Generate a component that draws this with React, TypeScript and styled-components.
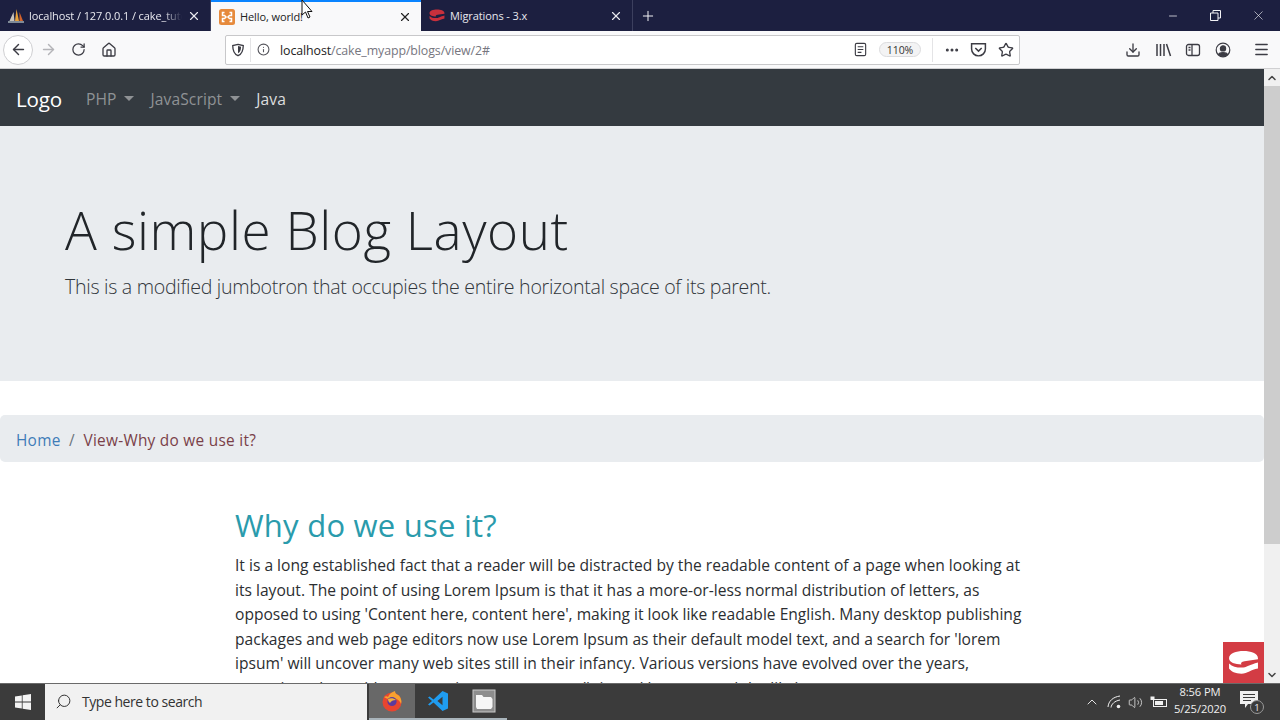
import styled, { createGlobalStyle } from 'styled-components';
import {
    ArrowLeft,
    ArrowRight,
    ChevronDown,
    ChevronUp,
    Download,
    Home,
    Info,
    Menu,
    Minus,
    MoreHorizontal,
    Plus,
    RotateCw,
    Search,
    Star,
    Volume2,
    X,
} from 'lucide-react';

const paragraphLines = [
    'It is a long established fact that a reader will be distracted by the readable content of a page when looking at',
    'its layout. The point of using Lorem Ipsum is that it has a more-or-less normal distribution of letters, as',
    "opposed to using 'Content here, content here', making it look like readable English. Many desktop publishing",
    "packages and web page editors now use Lorem Ipsum as their default model text, and a search for 'lorem",
    "ipsum' will uncover many web sites still in their infancy. Various versions have evolved over the years,",
    'sometimes by accident, sometimes on purpose (injected humour and the like).',
];

const GlobalStyle = createGlobalStyle`
    html, body {
        margin: 0;
        padding: 0;
        background: #fff;
    }
    * {
        box-sizing: border-box;
    }
`;

const Screen = styled.div`
    position: relative;
    width: 1280px;
    height: 720px;
    overflow: hidden;
    display: flex;
    flex-direction: column;
    font-family: 'Open Sans', 'Noto Sans', sans-serif;
`;

const TabBar = styled.div`
    height: 31px;
    flex: none;
    display: flex;
    background: #1c1f40;
    color: #f2f2f5;
`;

const Tab = styled.div<{ $active?: boolean; $width: number }>`
    width: ${(p) => p.$width}px;
    flex: none;
    display: flex;
    align-items: center;
    gap: 5px;
    padding: 0 9px 0 8px;
    font-size: 11px;
    letter-spacing: -0.1px;
    background: ${(p) => (p.$active ? '#f9f9fa' : 'transparent')};
    color: ${(p) => (p.$active ? '#222' : '#e8e8ee')};
    border-top: ${(p) => (p.$active ? '2px solid #0a84ff' : 'none')};
    border-right: ${(p) => (p.$active ? 'none' : '1px solid #3c3f5e')};
`;

const TabTitle = styled.span<{ $fade?: boolean }>`
    flex: 1;
    white-space: nowrap;
    overflow: hidden;
    mask-image: ${(p) => (p.$fade ? 'linear-gradient(to right, #000 88%, transparent 100%)' : 'none')};
`;

const NewTab = styled.div`
    width: 30px;
    display: flex;
    align-items: center;
    justify-content: center;
`;

const WindowButtons = styled.div`
    margin-left: auto;
    display: flex;
    align-items: center;
`;

const WindowButton = styled.div`
    width: 43px;
    height: 30px;
    display: flex;
    align-items: center;
    justify-content: center;
`;

const Toolbar = styled.div`
    height: 38px;
    flex: none;
    display: flex;
    align-items: center;
    background: #f9f9fa;
    color: #3c3c44;
    padding-left: 3px;
    border-bottom: 1px solid #d0d0d2;
`;

const ToolButton = styled.div<{ $width?: number; $faded?: boolean; $round?: boolean }>`
    width: ${(p) => p.$width ?? 30}px;
    height: 30px;
    flex: none;
    display: flex;
    align-items: center;
    justify-content: center;
    color: ${(p) => (p.$faded ? '#b4b4b8' : 'inherit')};
    border-radius: 50%;
    border: ${(p) => (p.$round ? '1px solid #cfcfd2' : 'none')};
    background: ${(p) => (p.$round ? '#fff' : 'transparent')};
`;

const NavButtons = styled.div`
    display: flex;
    align-items: center;
    gap: 0;
    margin-right: 101px;
`;

const UrlBar = styled.div`
    width: 795px;
    height: 30px;
    flex: none;
    display: flex;
    align-items: center;
    background: #fff;
    border: 1px solid #c8c8ca;
    border-radius: 2px;
    font-size: 12.4px;
    letter-spacing: -0.1px;
    padding-left: 5px;
`;

const UrlDivider = styled.div<{ $margin: string }>`
    width: 1px;
    height: 24px;
    background: #e4e4e6;
    margin: ${(p) => p.$margin};
`;

const UrlText = styled.div`
    margin: 2px 0 0 10px;
    white-space: nowrap;
`;

const UrlHost = styled.span`
    color: #222;
`;

const UrlPath = styled.span`
    color: #767680;
`;

const UrlFiller = styled.div`
    flex: 1;
`;

const ZoomPill = styled.div`
    width: 42px;
    height: 15px;
    margin: 0 11px 0 11px;
    display: flex;
    align-items: center;
    justify-content: center;
    background: #f3f3f4;
    border: 1px solid #dcdcde;
    border-radius: 8px;
    font-size: 10.5px;
    color: #333;
`;

const ToolGroup = styled.div`
    margin-left: auto;
    display: flex;
    align-items: center;
    padding-right: 4px;
`;

const Viewport = styled.div`
    flex: 1;
    min-height: 0;
    display: flex;
`;

const Page = styled.div`
    flex: 1;
    min-width: 0;
    overflow: hidden;
    background: #fff;
    color: #212529;
`;

const NavBar = styled.nav`
    height: 57px;
    display: flex;
    align-items: center;
    padding: 3px 16px 0;
    background: #343a40;
    font-size: 15.6px;
`;

const Brand = styled.span`
    font-size: 20.6px;
    color: #fff;
    margin-right: 24px;
    letter-spacing: -0.2px;
`;

const NavItem = styled.span<{ $active?: boolean; $gap: number }>`
    display: flex;
    align-items: center;
    color: ${(p) => (p.$active ? '#dcddde' : '#8f9295')};
    margin-right: ${(p) => p.$gap}px;
    letter-spacing: 0.1px;
`;

const Caret = styled.span`
    width: 0;
    height: 0;
    margin-left: 8px;
    margin-top: -2px;
    border-top: 5px solid currentColor;
    border-left: 5px solid transparent;
    border-right: 5px solid transparent;
`;

const Jumbotron = styled.section`
    height: 255px;
    padding: 69px 65px 0;
    background: #e9ecef;
`;

const DisplayTitle = styled.h1`
    margin: 0;
    font-size: 53px;
    line-height: 70px;
    font-weight: 300;
    color: #212529;
    letter-spacing: 0.55px;
    white-space: nowrap;
`;

const Lead = styled.p`
    margin: 7px 0 0;
    font-size: 19.6px;
    line-height: 30px;
    font-weight: 300;
    color: #31363b;
    letter-spacing: -0.29px;
    white-space: nowrap;
`;

const Breadcrumb = styled.div`
    height: 47px;
    margin-top: 34px;
    display: flex;
    align-items: center;
    padding: 3px 16px 0;
    gap: 8.5px;
    background: #e9ecef;
    border-radius: 5px;
    font-size: 15.4px;
    letter-spacing: 0.27px;
`;

const Crumb = styled.span<{ $color: string }>`
    color: ${(p) => p.$color};
`;

const Article = styled.article`
    padding: 43px 0 0 235px;
`;

const ArticleTitle = styled.h2`
    margin: 0 0 8px;
    font-size: 31px;
    line-height: 40px;
    font-weight: 400;
    color: #2a9bac;
    letter-spacing: 0.24px;
`;

const ArticleLine = styled.div`
    font-size: 15.6px;
    line-height: 24.6px;
    color: #2b2e31;
    white-space: nowrap;
`;

const Scrollbar = styled.div`
    width: 16px;
    flex: none;
    display: flex;
    flex-direction: column;
    align-items: center;
    background: #f0f0f0;
    color: #444;
`;

const ScrollArrow = styled.div`
    height: 17px;
    flex: none;
    display: flex;
    align-items: center;
    justify-content: center;
`;

const ScrollThumb = styled.div`
    width: 100%;
    height: 458px;
    flex: none;
    background: #cdcdcd;
`;

const ScrollTrack = styled.div`
    flex: 1;
`;

const CakeBadge = styled.div`
    position: absolute;
    left: 1223px;
    top: 642px;
    width: 41px;
    height: 41px;
    background: #d33c44;
    display: flex;
    align-items: center;
    justify-content: center;
`;

const Cursor = styled.svg`
    position: absolute;
    left: 301px;
    top: 0;
`;

const TaskBar = styled.div`
    height: 37px;
    flex: none;
    display: flex;
    background: #3b3b3b;
    color: #f0f0f0;
    border-top: 1px solid #6a6a6a;
`;

const StartButton = styled.div`
    width: 45px;
    display: flex;
    align-items: center;
    justify-content: center;
`;

const SearchBox = styled.div`
    width: 322px;
    display: flex;
    align-items: center;
    gap: 10px;
    padding: 0 0 2px 10px;
    background: #f1f1f1;
    color: #333;
    font-size: 14px;
    letter-spacing: -0.46px;
`;

const TaskIcon = styled.div<{ $active?: boolean }>`
    width: 46px;
    margin-left: ${(p) => (p.$active ? '2px' : '0')};
    display: flex;
    align-items: center;
    justify-content: center;
    background: ${(p) => (p.$active ? '#686868' : 'transparent')};
    border-bottom: 2px solid #a9b4bb;
`;

const Tray = styled.div`
    margin-left: auto;
    display: flex;
    align-items: center;
    gap: 7px;
    padding-right: 20px;
`;

const Clock = styled.div`
    width: 52px;
    margin-top: -4px;
    text-align: center;
    font-size: 11.2px;
    line-height: 17px;
    letter-spacing: -0.1px;
    white-space: nowrap;
`;

const NotifyWrap = styled.div`
    position: relative;
    margin-left: 7px;
    width: 20px;
    height: 22px;
`;

const NotifyCount = styled.span`
    position: absolute;
    right: -4px;
    bottom: -1px;
    width: 14px;
    height: 14px;
    display: flex;
    align-items: center;
    justify-content: center;
    border-radius: 50%;
    border: 1px solid #9a9a9a;
    background: #3b3b3b;
    font-size: 9.5px;
`;

const WindowsLogo = () => (
    <svg width="16" height="16" viewBox="0 0 16 16" fill="#f4f4f4">
        <path d="M0 2.4 6.8 1.4V7.5H0ZM7.6 1.3 16 0V7.5H7.6ZM0 8.4H6.8V14.6L0 13.6ZM7.6 8.4H16V16L7.6 14.7Z" />
    </svg>
);

const FirefoxIcon = () => (
    <svg width="22" height="22" viewBox="0 0 22 22">
        <circle cx="11" cy="12" r="9.5" fill="#e8452f" />
        <path d="M3 7c2-1 3-1 4 0 1-3 4-5 7-6 0 2 1 3 3 4 3 2 4 6 3 9-1-3-3-5-6-5-5 0-7 1-11-2Z" fill="#f7a230" />
        <circle cx="11" cy="11.5" r="4.6" fill="#5c3a9e" />
        <path d="M7 9c2-1 6-1 8 1-3 0-5 1-6 3-1-1-2-2-2-4Z" fill="#f0b23c" />
    </svg>
);

const VsCodeIcon = () => (
    <svg width="22" height="22" viewBox="0 0 22 22">
        <path d="M15.5 1 21 3.6V18.4L15.5 21 6.5 12.6 2.6 15.6 1 14.6 5 11 1 7.4 2.6 6.4 6.5 9.4Z" fill="#1f9cf0" />
        <path d="M15.5 6.8 10.4 11l5.1 4.2Z" fill="#3b3b3b" />
    </svg>
);

const ExplorerIcon = () => (
    <svg width="24" height="24" viewBox="0 0 24 24">
        <rect x="1" y="1" width="22" height="22" fill="#8d8d8d" stroke="#c9c9c9" />
        <path d="M4 6h6l1.500 2H19l1.500 2v8l-1.500 2H5l-1-2Z" fill="#f6f6f6" />
    </svg>
);

const XamppIcon = () => (
    <svg width="16" height="16" viewBox="0 0 16 16">
        <rect width="16" height="16" rx="2.500" fill="#e68a3c" />
        <path
            d="M5.500 3.500h-2v3h2L7 8 5.500 9.500h-2v3h2M10.500 3.500h2v3h-2L9 8l1.500 1.500h2v3h-2"
            fill="none"
            stroke="#fff"
            strokeWidth="1.500"
        />
    </svg>
);

const SailsIcon = () => (
    <svg width="16" height="16" viewBox="0 0 16 16">
        <path d="M8.500 1 11 13H7Z" fill="#e8a23a" />
        <path d="M5.500 4 6.500 13H1.500Z" fill="#c9c4bc" />
        <path d="M11.500 4 15 13H11.500Z" fill="#d2622c" />
        <path d="M0 13h16v2H0Z" fill="#7f8a96" />
    </svg>
);

const CakeIcon = ({ size, color }: { size: number; color: string }) => (
    <svg width={size} height={size * 0.8} viewBox="0 0 30 24" fill={color}>
        <path d="M1 8C1 3 8 1 15 1s14 2 14 7v1l-13 2c-3 .5-4 2-3 3C7 14 1 12 1 8Z" />
        <path d="M1 13c3 3 7 4 12 4s8-3 16-5v6c-7 1-10 5-16 5-6 0-10-2-12-5Z" />
    </svg>
);

const ReaderIcon = () => (
    <svg width="15" height="15" viewBox="0 0 16 16" fill="none" stroke="currentColor" strokeWidth="1.2">
        <rect x="2.5" y="1.5" width="11" height="13" rx="1.5" />
        <path d="M5 5h6M5 8h6M5 11h4" />
    </svg>
);

const ShieldIcon = () => (
    <svg width="14" height="14" viewBox="0 0 16 16" fill="none" stroke="currentColor" strokeWidth="1.5">
        <path d="M8 1.5 14 3c0 6-1.5 9.5-6 11.5C3.5 12.5 2 9 2 3Z" />
        <path d="M8 3.5 11.5 4.4C11.4 8 10.5 10.4 8 11.8Z" fill="currentColor" stroke="none" />
    </svg>
);

const PocketIcon = () => (
    <svg width="17" height="17" viewBox="0 0 16 16" fill="none" stroke="currentColor" strokeWidth="1.4">
        <path d="M1.5 2.5h13v5a6.5 6.5 0 0 1-13 0Z" />
        <path d="m5 6.5 3 3 3-3" />
    </svg>
);

const LibraryIcon = () => (
    <svg width="17" height="16" viewBox="0 0 17 16" fill="none" stroke="currentColor" strokeWidth="1.5">
        <path d="M2 2v12M5.5 2v12M9 2v12M11.5 2l4 12" />
    </svg>
);

const SidebarIcon = () => (
    <svg width="16" height="16" viewBox="0 0 16 16" fill="none" stroke="currentColor" strokeWidth="1.3">
        <rect x="1.5" y="2.5" width="13" height="11" rx="2" />
        <path d="M7 2.5v11" />
        <path d="M3.5 5.5h2M3.5 8h2" />
    </svg>
);

const AccountIcon = () => (
    <svg width="16" height="16" viewBox="0 0 16 16" fill="none" stroke="currentColor" strokeWidth="1.2">
        <circle cx="8" cy="8" r="6.8" />
        <circle cx="8" cy="6.4" r="2.6" fill="currentColor" />
        <path d="M3.5 12.5c1-2.4 8-2.4 9 0-2.500 2.200-6.500 2.200-9 0Z" fill="currentColor" />
    </svg>
);

const RestoreIcon = () => (
    <svg width="11" height="11" viewBox="0 0 11 11" fill="none" stroke="currentColor">
        <path d="M.5 3h7.500v7.500H.5ZM3 3V.5h7.500V8H8" />
    </svg>
);

const TrayWifi = () => (
    <svg width="14" height="14" viewBox="0 0 14 14" fill="none" stroke="currentColor">
        <path d="M1 12C1.500 6 6 2 13 1M4 12.500C4.500 9 7.500 6 13 5" />
        <circle cx="11.500" cy="11.500" r="1.800" fill="currentColor" stroke="none" />
    </svg>
);

const TrayBattery = () => (
    <svg width="17" height="12" viewBox="0 0 17 12" fill="none" stroke="currentColor">
        <rect x="3.500" y="3.500" width="13" height="7" />
        <rect x="5" y="5" width="8" height="4" fill="currentColor" stroke="none" />
        <rect x="0.500" y="0.500" width="4" height="3.500" fill="currentColor" stroke="none" />
    </svg>
);

const TrayMessage = () => (
    <svg width="18" height="18" viewBox="0 0 18 18" fill="#f0f0f0">
        <path d="M0 0h18v13H8l-3 4v-4H0Z" />
        <path d="M3 3.500h12M3 6.500h12M3 9.500h8" stroke="#3b3b3b" />
    </svg>
);

export default function App() {
    return (
        <Screen>
            <GlobalStyle />
            <TabBar>
                <Tab $width={211}>
                    <SailsIcon />
                    <TabTitle $fade>localhost / 127.0.0.1 / cake_tutorial</TabTitle>
                    <X size={14} />
                </Tab>
                <Tab $width={210} $active>
                    <XamppIcon />
                    <TabTitle>Hello, world!</TabTitle>
                    <X size={14} />
                </Tab>
                <Tab $width={212}>
                    <CakeIcon size={16} color="#c8303c" />
                    <TabTitle>Migrations - 3.x</TabTitle>
                    <X size={14} />
                </Tab>
                <NewTab>
                    <Plus size={16} strokeWidth={1.5} />
                </NewTab>
                <WindowButtons>
                    <WindowButton>
                        <Minus size={12} strokeWidth={1.5} />
                    </WindowButton>
                    <WindowButton>
                        <RestoreIcon />
                    </WindowButton>
                    <WindowButton>
                        <X size={15} strokeWidth={1} />
                    </WindowButton>
                </WindowButtons>
            </TabBar>
            <Toolbar>
                <NavButtons>
                    <ToolButton $round>
                        <ArrowLeft size={17} />
                    </ToolButton>
                    <ToolButton $faded>
                        <ArrowRight size={17} />
                    </ToolButton>
                    <ToolButton $width={31}>
                        <RotateCw size={15} />
                    </ToolButton>
                    <ToolButton>
                        <Home size={16} />
                    </ToolButton>
                </NavButtons>
                <UrlBar>
                    <ShieldIcon />
                    <UrlDivider $margin="0 6px 0 5px" />
                    <Info size={13} color="#55555c" />
                    <UrlText>
                        <UrlHost>localhost</UrlHost>
                        <UrlPath>/cake_myapp/blogs/view/2#</UrlPath>
                    </UrlText>
                    <UrlFiller />
                    <ReaderIcon />
                    <ZoomPill>110%</ZoomPill>
                    <UrlDivider $margin="0 6px 0 0" />
                    <ToolButton $width={26}>
                        <MoreHorizontal size={16} strokeWidth={2.5} />
                    </ToolButton>
                    <ToolButton $width={27}>
                        <PocketIcon />
                    </ToolButton>
                    <ToolButton $width={27}>
                        <Star size={16} />
                    </ToolButton>
                </UrlBar>
                <ToolGroup>
                    <ToolButton>
                        <Download size={16} />
                    </ToolButton>
                    <ToolButton>
                        <LibraryIcon />
                    </ToolButton>
                    <ToolButton>
                        <SidebarIcon />
                    </ToolButton>
                    <ToolButton>
                        <AccountIcon />
                    </ToolButton>
                    <ToolButton $width={8} />
                    <ToolButton>
                        <Menu size={17} />
                    </ToolButton>
                </ToolGroup>
            </Toolbar>
            <Viewport>
                <Page>
                    <NavBar>
                        <Brand>Logo</Brand>
                        <NavItem $gap={16}>
                            PHP
                            <Caret />
                        </NavItem>
                        <NavItem $gap={16}>
                            JavaScript
                            <Caret />
                        </NavItem>
                        <NavItem $active $gap={0}>
                            Java
                        </NavItem>
                    </NavBar>
                    <Jumbotron>
                        <DisplayTitle>A simple Blog Layout</DisplayTitle>
                        <Lead>This is a modified jumbotron that occupies the entire horizontal space of its parent.</Lead>
                    </Jumbotron>
                    <Breadcrumb>
                        <Crumb $color="#3f7cb8">Home</Crumb>
                        <Crumb $color="#6c757d">/</Crumb>
                        <Crumb $color="#7a3f48">View-Why do we use it?</Crumb>
                    </Breadcrumb>
                    <Article>
                        <ArticleTitle>Why do we use it?</ArticleTitle>
                        {paragraphLines.map((line) => (
                            <ArticleLine key={line}>{line}</ArticleLine>
                        ))}
                    </Article>
                </Page>
                <Scrollbar>
                    <ScrollArrow>
                        <ChevronUp size={12} strokeWidth={3} />
                    </ScrollArrow>
                    <ScrollThumb />
                    <ScrollTrack />
                    <ScrollArrow>
                        <ChevronDown size={12} strokeWidth={3} />
                    </ScrollArrow>
                </Scrollbar>
            </Viewport>
            <TaskBar>
                <StartButton>
                    <WindowsLogo />
                </StartButton>
                <SearchBox>
                    <Search size={17} strokeWidth={1.4} style={{ transform: 'scaleX(-1)' }} />
                    Type here to search
                </SearchBox>
                <TaskIcon $active>
                    <FirefoxIcon />
                </TaskIcon>
                <TaskIcon>
                    <VsCodeIcon />
                </TaskIcon>
                <TaskIcon>
                    <ExplorerIcon />
                </TaskIcon>
                <Tray>
                    <ChevronUp size={16} strokeWidth={1.4} />
                    <TrayWifi />
                    <Volume2 size={15} strokeWidth={1.2} />
                    <TrayBattery />
                    <Clock>
                        8:56 PM
                        <br />
                        5/25/2020
                    </Clock>
                    <NotifyWrap>
                        <TrayMessage />
                        <NotifyCount>1</NotifyCount>
                    </NotifyWrap>
                </Tray>
            </TaskBar>
            <CakeBadge>
                <CakeIcon size={31} color="#fff" />
            </CakeBadge>
            <Cursor width="12" height="19" viewBox="0 0 12 19">
                <path d="M1 0v15l3.500-3 2.500 6 2-1-2.500-5.500H11Z" fill="#fff" stroke="#111" strokeWidth="1" />
            </Cursor>
        </Screen>
    );
}
